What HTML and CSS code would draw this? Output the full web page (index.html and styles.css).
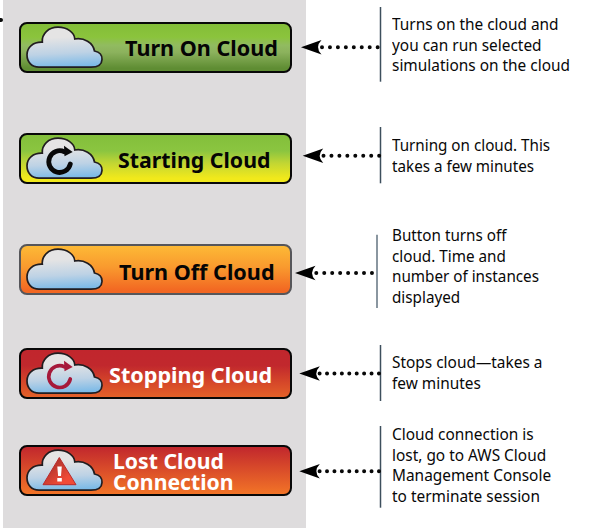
FILE: index.html
```
<!DOCTYPE html>
<html lang="en">
<head>
<meta charset="utf-8">
<title>Cloud button states</title>
<link rel="stylesheet" href="styles.css">
</head>
<body>
<svg class="defs" width="0" height="0" aria-hidden="true">
  <defs>
    <linearGradient id="sky" x1=".45" y1="0" x2=".55" y2="1"><stop offset=".25" stop-color="#e5e4e4"/><stop offset=".65" stop-color="#bdd2e5"/><stop offset="1" stop-color="#79b9e7"/></linearGradient>
    <linearGradient id="alert" x1="0" y1="0" x2="1" y2="1"><stop offset=".3" stop-color="#b8362d"/><stop offset=".75" stop-color="#f14a36"/></linearGradient>
    <path id="cloud" d="M13 41.200C5.500 41.200 1 36 1 28.800C1 21.500 7 15.800 16.300 16.200C15.500 8 22.500 1.200 32 1.200C41 1.200 48.500 6.500 48.800 13C58 11.500 67 16.500 68.500 25C73.500 26 76.200 29.500 76 33.500C75.800 38.500 72 41.200 65 41.200Z" fill="url(#sky)" stroke="#211d20" stroke-width="1.700"/>
    <g id="reload"><path d="M38.500 14.800A10.900 10.900 0 1 0 44.300 27" fill="none" stroke="currentColor" stroke-linecap="round"/><path d="M38 8.700L46.700 15L38.500 19.300Z" fill="currentColor"/></g>
    <path id="head" d="M0 0L20.500 -7.300Q13.500 0 20.500 7.300Z"/>
  </defs>
</svg>
<main class="legend">
  <section class="row r1">
    <button class="state on"><svg class="icon" viewBox="0 0 78 43"><use href="#cloud"/></svg><span class="label">Turn On Cloud</span></button>
    <svg class="link" viewBox="292 0 92 111"><path class="rule" d="M380.500 7V81.700"/><use href="#head" x="301" y="47.300"/><path class="dots" d="M322 47.300H379.800"/></svg>
    <p class="note">Turns on the cloud and<br>you can run selected<br>simulations on the cloud</p>
  </section>
  <section class="row r2">
    <button class="state starting"><svg class="icon" viewBox="0 0 78 43"><use href="#cloud"/><use href="#reload"/></svg><span class="label">Starting Cloud</span></button>
    <svg class="link" viewBox="292 111 92 111"><path class="rule" d="M380.500 127V183.300"/><use href="#head" x="302.700" y="155.700"/><path class="dots" d="M323.500 155.700H379.800"/></svg>
    <p class="note">Turning on cloud. This<br>takes a few minutes</p>
  </section>
  <section class="row r3">
    <button class="state off"><svg class="icon" viewBox="0 0 78 43"><use href="#cloud"/></svg><span class="label">Turn Off Cloud</span></button>
    <svg class="link" viewBox="292 222 92 104"><path class="rule soft" d="M377 234.700V308"/><use href="#head" x="295" y="273"/><path class="dots" d="M316.300 273H373"/></svg>
    <p class="note">Button turns off<br>cloud. Time and<br>number of instances<br>displayed</p>
  </section>
  <section class="row r4">
    <button class="state stopping"><svg class="icon" viewBox="0 0 78 43"><use href="#cloud"/><use href="#reload"/></svg><span class="label">Stopping Cloud</span></button>
    <svg class="link" viewBox="292 326 92 97"><path class="rule" d="M380.500 345V401"/><use href="#head" x="299.300" y="373.500"/><path class="dots tight" d="M319.600 373.500H379.800"/></svg>
    <p class="note">Stops cloud—takes a<br>few minutes</p>
  </section>
  <section class="row r5">
    <button class="state lost"><svg class="icon" viewBox="0 0 78 43"><use href="#cloud"/><path d="M33.300 8.500L50 35.700H17Z" fill="url(#alert)" stroke="#b92b2d" stroke-width="1"/><path d="M31.300 17.500H35.800L35 27H32.100ZM31.300 29H35.800V32.500H31.300Z" fill="#fff"/></svg><span class="label">Lost Cloud<br>Connection</span></button>
    <svg class="link" viewBox="292 423 92 105"><path class="rule" d="M380.500 426V507.700"/><use href="#head" x="299.300" y="471.300"/><path class="dots tight" d="M319.600 471.300H379.800"/></svg>
    <p class="note">Cloud connection is<br>lost, go to AWS Cloud<br>Management Console<br>to terminate session</p>
  </section>
</main>
<span class="edge-dot"></span>
</body>
</html>
```

FILE: styles.css
```
* { box-sizing: border-box; }
body {
  margin: 0;
  width: 600px;
  height: 528px;
  overflow: hidden;
  color: #080808;
  background: linear-gradient(90deg, #fff 3px, #dedcdd 3px, #dedcdd 306px, #fff 306px);
}
.defs { position: absolute; }
.legend { display: grid; grid-template-rows: 111px 111px 104px 97px 105px; }
.row { display: grid; grid-template-columns: 292px 92px 1fr; align-items: start; }
.state {
  display: flex;
  align-items: flex-start;
  width: 273px;
  height: 51px;
  margin: 22px 0 0 19px;
  padding: 0;
  border: 2px solid #080808;
  border-radius: 8px;
  color: #050505;
  font: bold 21px/21px "Noto Sans", sans-serif;
  text-align: left;
}
.icon { flex: none; width: 78px; height: 43px; margin: 2px 0 0 5px; overflow: visible; }
.label { flex: none; white-space: nowrap; transform: scaleX(1.028); transform-origin: 0 50%; }
.on { background: linear-gradient(#83bd38, #8bc43c 28%, #91bb60 45%, #8cb25d 60%, #5f8d33 94%); }
.starting { background: linear-gradient(#83bf3b, #8bc540 34%, #c2d633 60%, #f1e91b 92%); }
.off { background: linear-gradient(#fdb936, #f99a2e 45%, #f26722 95%); border-color: #56565a; }
.stopping { background: linear-gradient(#c1262d, #c1282d 33%, #d64829 70%, #e36129); color: #fff; }
.lost { background: linear-gradient(#c1272d, #d84a2a 45%, #f27427); color: #fff; }
.on .label { margin: 14px 0 0 21px; }
.starting .label { margin: 15px 0 0 14px; transform: scaleX(1.015); }
.off .label { margin: 16px 0 0 15px; }
.stopping .label { margin: 15px 0 0 5px; }
.lost .label { margin: 4px 0 0 9px; transform: scaleX(1.01); }
.starting .icon { color: #080808; stroke-width: 4.8; }
.stopping .icon { color: #a6193a; stroke-width: 3.7; }
.link { display: block; width: 92px; height: 100%; overflow: visible; }
.rule { stroke: #3d4f5d; stroke-width: 1.5; }
.soft { stroke: #637380; }
.dots { stroke: #080808; stroke-width: 4; stroke-linecap: round; stroke-dasharray: 0 7.95; }
.tight { stroke-dasharray: 0 7.42; }
.note {
  margin: 0 0 0 8px;
  font: 16px/20.7px "Noto Sans", sans-serif;
  white-space: nowrap;
  transform: scaleX(.963);
  transform-origin: 0 0;
}
.r1 .note { padding-top: 14px; }
.r2 .note { padding-top: 24px; transform: scaleX(.95); }
.r3 .note { padding-top: 3px; transform: scaleX(.952); }
.r4 .note { padding-top: 26px; }
.r5 .note { padding-top: 1px; }
.edge-dot { position: absolute; left: -2px; top: 18px; width: 5px; height: 4px; border-radius: 2px; background: #080808; }
```
